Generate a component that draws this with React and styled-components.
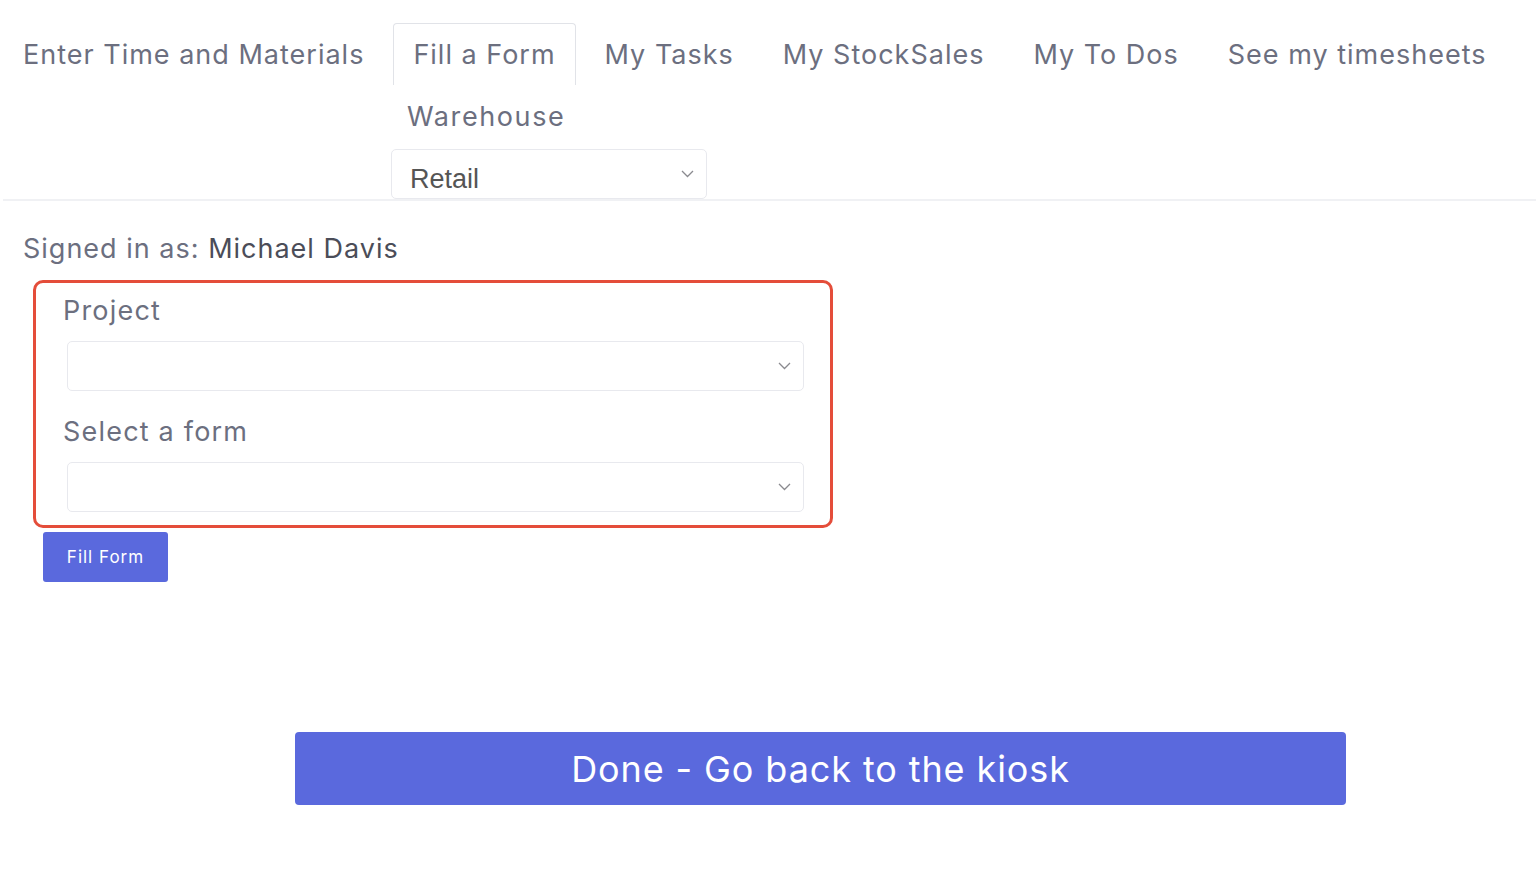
import React from "react";
import styled, { createGlobalStyle } from "styled-components";

const Global = createGlobalStyle`
  html, body { margin: 0; padding: 0; background: #fff; }
  body { font-family: Inter, "Open Sans", sans-serif; }
  * { box-sizing: border-box; }
`;

const Header = styled.header`
  margin-left: 3px;
  border-bottom: 2px solid #f0f1f4;
`;

const NavRow = styled.nav`
  display: flex;
  padding-top: 23px;
`;

const NavItem = styled.a`
  display: block;
  height: 62px;
  line-height: 62px;
  padding: 0 19px;
  margin-right: 9px;
  font-size: 27px;
  color: #6c6f7f;
  letter-spacing: 1px;
  text-decoration: none;
  white-space: nowrap;
  border: 1px solid ${(p) => (p.$active ? "#e1e3e8" : "transparent")};
  border-bottom: none;
  border-radius: 4px 4px 0 0;
`;

const Warehouse = styled.div`
  margin-left: 388px;
  width: 316px;
`;

const WarehouseLabel = styled.div`
  height: 64px;
  line-height: 64px;
  padding-left: 16px;
  font-size: 27px;
  letter-spacing: 1.6px;
  color: #6c6f7f;
`;

const SelectBox = styled.div`
  display: flex;
  align-items: center;
  justify-content: space-between;
  height: 50px;
  width: ${(p) => p.$width || "100%"};
  padding: 0 12px 0 18px;
  border: 1px solid #e8e9ee;
  border-radius: 5px;
  background: #fff;
  font-family: "Liberation Sans", Arial, sans-serif;
  font-size: 27px;
  color: #555;
`;

const SelectText = styled.span`
  padding-top: 10px;
`;

const Main = styled.main`
  padding-left: 23px;
`;

const Signed = styled.div`
  margin-top: 28px;
  line-height: 40px;
  font-size: 27px;
  letter-spacing: 1px;
  color: #6c6f7f;
`;

const Name = styled.span`
  color: #4b4d58;
`;

const RedBox = styled.div`
  margin: 11px 0 0 10px;
  width: 800px;
  border: 3px solid #e44d3a;
  border-radius: 10px;
  padding: 8px 26px 13px 31px;
`;

const Label = styled.div`
  margin-left: -4px;
  line-height: 40px;
  font-size: 27px;
  letter-spacing: 1.2px;
  color: #6c6f7f;
  margin-top: ${(p) => p.$top || 0}px;
  margin-bottom: 10px;
`;

const FillButton = styled.button`
  display: block;
  margin: 4px 0 0 20px;
  width: 125px;
  height: 50px;
  border: none;
  border-radius: 3px;
  background: #5a69dd;
  color: #fff;
  font-family: Inter, sans-serif;
  font-size: 17px;
  letter-spacing: 1px;
`;

const DoneButton = styled.button`
  display: block;
  margin: 150px 0 0 272px;
  width: 1051px;
  height: 73px;
  border: none;
  border-radius: 4px;
  background: #5a69dd;
  color: #fff;
  font-family: Inter, sans-serif;
  font-size: 36px;
  letter-spacing: 0.9px;
`;

const Chevron = () => (
  <svg width="13" height="8" viewBox="0 0 13 8">
    <path d="M1 1 L6.5 6.5 L12 1" fill="none" stroke="#8a8a8f" strokeWidth="1.3" />
  </svg>
);

export default function App() {
  return (
    <>
      <Global />
      <Header>
        <NavRow>
          <NavItem>Enter Time and Materials</NavItem>
          <NavItem $active>Fill a Form</NavItem>
          <NavItem>My Tasks</NavItem>
          <NavItem>My StockSales</NavItem>
          <NavItem>My To Dos</NavItem>
          <NavItem>See my timesheets</NavItem>
        </NavRow>
        <Warehouse>
          <WarehouseLabel>Warehouse</WarehouseLabel>
          <SelectBox $width="316px">
            <SelectText>Retail</SelectText>
            <Chevron />
          </SelectBox>
        </Warehouse>
      </Header>
      <Main>
        <Signed>
          Signed in as: <Name>Michael Davis</Name>
        </Signed>
        <RedBox>
          <Label>Project</Label>
          <SelectBox>
            <span />
            <Chevron />
          </SelectBox>
          <Label $top={21}>Select a form</Label>
          <SelectBox>
            <span />
            <Chevron />
          </SelectBox>
        </RedBox>
        <FillButton>Fill Form</FillButton>
        <DoneButton>Done - Go back to the kiosk</DoneButton>
      </Main>
    </>
  );
}
